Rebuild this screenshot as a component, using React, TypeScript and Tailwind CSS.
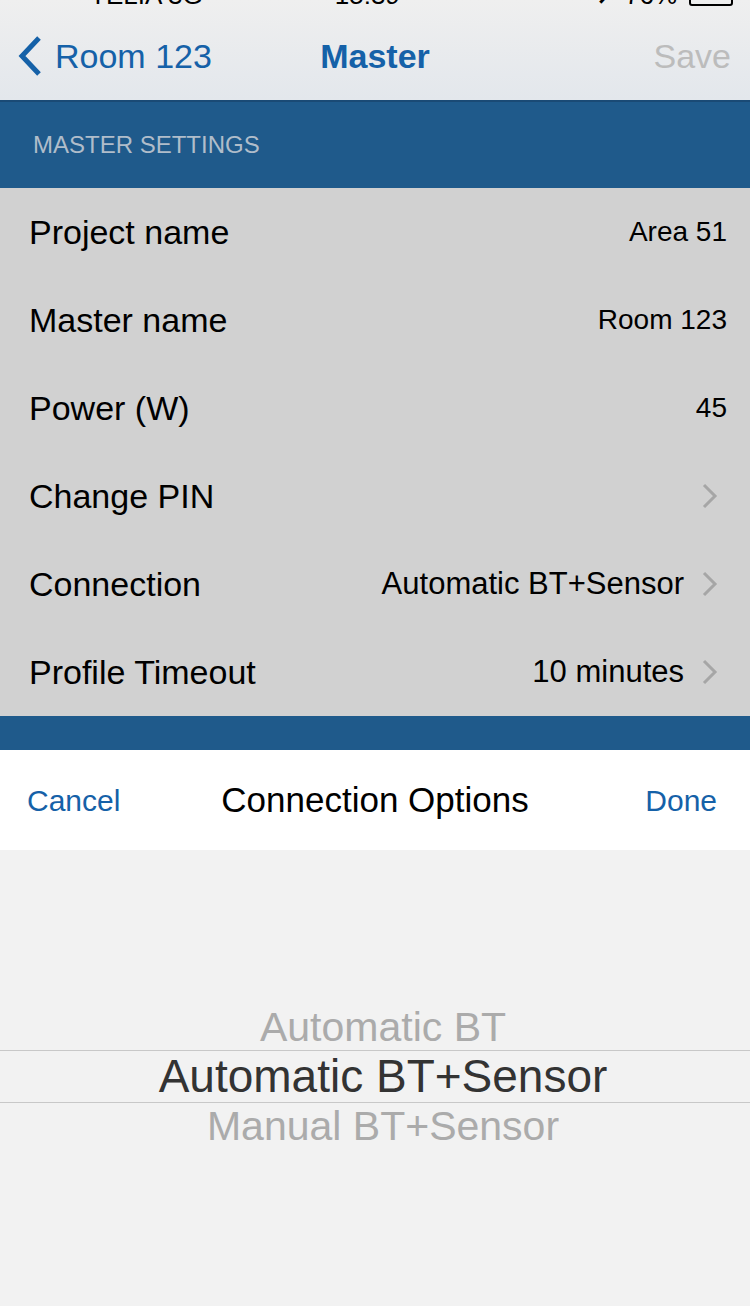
import React from 'react';

const rows = [
  { label: 'Project name', value: 'Area 51', chevron: false },
  { label: 'Master name', value: 'Room 123', chevron: false },
  { label: 'Power (W)', value: '45', chevron: false },
  { label: 'Change PIN', value: '', chevron: true },
  { label: 'Connection', value: 'Automatic BT+Sensor', chevron: true },
  { label: 'Profile Timeout', value: '10 minutes', chevron: true },
];

const Chevron: React.FC = () => (
  <svg width="18" height="28" viewBox="0 0 18 28" className="shrink-0">
    <path d="M3 3l11 11L3 25" fill="none" stroke="#a6a6a6" strokeWidth="3" />
  </svg>
);

export default function App() {
  return (
    <div className="w-[750px] h-[1306px] flex flex-col overflow-hidden font-['Liberation_Sans',Arial,sans-serif] bg-[#f2f2f2]">
      {/* nav bar, status bar scrolled mostly out of view */}
      <div className="h-[100px] flex flex-col bg-gradient-to-b from-[#efefef] to-[#e3e7ec]">
        <div className="h-[6px] overflow-hidden">
          <div className="-mt-[17px] flex items-center text-[26px] leading-[24px] text-black">
            <span className="ml-[90px]">TELIA 3G</span>
            <span className="ml-[132px]">15:39</span>
            <span className="ml-[196px]">➚ 76%</span>
            <span className="ml-[12px] w-[44px] h-[21px] border-2 border-black rounded-[3px]" />
          </div>
        </div>
        <div className="flex-1 grid grid-cols-[1fr_auto_1fr] items-center text-[34px] pt-[6px]">
          <div className="flex items-center pl-[17px] gap-[12px] text-[#1561a8]">
            <svg width="26" height="42" viewBox="0 0 26 42">
              <path d="M22 3L5 21l17 18" fill="none" stroke="#1561a8" strokeWidth="5" />
            </svg>
            <span>Room 123</span>
          </div>
          <div className="font-bold text-[#1561a8]">Master</div>
          <div className="text-right pr-[19px] text-[#bcbcbc]">Save</div>
        </div>
      </div>

      {/* section header */}
      <div className="h-[88px] bg-[#1f5a8b] border-t-2 border-[#1a4a75] flex items-center pl-[33px] text-[24px] text-[#b0bdca]">
        MASTER SETTINGS
      </div>

      {/* settings list */}
      <div className="bg-[#d1d1d1]">
        {rows.map((r) => (
          <div key={r.label} className="h-[88px] flex items-center pl-[29px] pr-[31px]">
            <span className="flex-1 text-[34px] text-black">{r.label}</span>
            {r.value && (
              <span className={r.chevron ? 'mr-[17px] text-[31px] text-black' : 'mr-[-8px] text-[28px] text-black'}>
                {r.value}
              </span>
            )}
            {r.chevron && <Chevron />}
          </div>
        ))}
      </div>

      <div className="h-[34px] bg-[#1f5a8b]" />

      {/* picker toolbar */}
      <div className="h-[100px] bg-white grid grid-cols-[1fr_auto_1fr] items-center">
        <span className="pl-[27px] text-[30px] text-[#1561a8]">Cancel</span>
        <span className="text-[35px] text-black">Connection Options</span>
        <span className="text-right pr-[33px] text-[30px] text-[#1561a8]">Done</span>
      </div>

      {/* picker wheel */}
      <div className="flex-1 flex flex-col pt-[154px] bg-[#f2f2f2]">
        <div className="h-[46px] flex items-end justify-center pl-[16px] text-[41px] leading-[46px] text-[#ababab]">
          Automatic BT
        </div>
        <div className="h-[53px] border-y border-[#c8c8c8] flex items-center justify-center pl-[16px] text-[46px] text-[#333333]">
          Automatic BT+Sensor
        </div>
        <div className="h-[46px] flex items-start justify-center pl-[16px] text-[41px] leading-[46px] text-[#ababab]">
          Manual BT+Sensor
        </div>
      </div>
    </div>
  );
}
